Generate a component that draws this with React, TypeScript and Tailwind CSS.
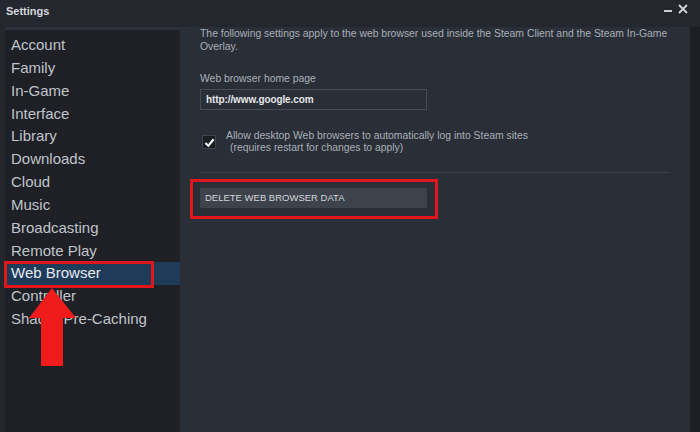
const menu = [
  "Account",
  "Family",
  "In-Game",
  "Interface",
  "Library",
  "Downloads",
  "Cloud",
  "Music",
  "Broadcasting",
  "Remote Play",
  "Web Browser",
  "Controller",
  "Shader Pre-Caching",
];

export default function App() {
  return (
    <div
      className="relative w-[700px] h-[432px] overflow-hidden bg-[#25272e] flex flex-col"
      style={{ fontFamily: '"Liberation Sans", Arial, sans-serif' }}
    >
      {/* Title bar */}
      <div className="h-[27px] flex items-start justify-between pl-[6px] pr-[12px]">
        <span className="mt-[3px] text-[11px] font-bold text-[#d4d7dc]">Settings</span>
        <div className="flex items-center gap-[6px] mt-[2px] text-[#c9ccd1]">
          <span className="mt-[6px] w-[8px] h-[2px] bg-[#c9ccd1]" />
          <svg width="10" height="10" viewBox="0 0 10 10" className="mt-[2px]">
            <path d="M1 1 L9 9 M9 1 L1 9" stroke="#d0d3d8" strokeWidth="1.8" />
          </svg>
        </div>
      </div>

      <div className="flex flex-1 pl-[5px]">
        {/* Sidebar */}
        <div className="w-[175px] bg-[#1e2026] border-t-[3px] border-[#2d3038] pt-[4px]">
          {menu.map((item) => (
            <div
              key={item}
              className={
                item === "Web Browser"
                  ? "h-[22.85px] leading-[22.85px] pl-[6px] text-[15px] text-[#e6e9ee] bg-[#1e3b5a]"
                  : "h-[22.85px] leading-[22.85px] pl-[6px] text-[15px] text-[#c0c4ca]"
              }
            >
              {item}
            </div>
          ))}
        </div>

        {/* Content */}
        <div className="relative flex-1 bg-[#2a2e37] px-[20px]">
          <p className="text-[10.4px] leading-[13px] text-[#a9aeb6]">
            The following settings apply to the web browser used inside the Steam Client and the Steam In-Game
            <br />
            Overlay.
          </p>

          <p className="mt-[19px] text-[10.4px] leading-[13px] text-[#a9aeb6]">Web browser home page</p>
          <div className="mt-[4px] w-[227px] h-[21px] border border-[#464b55] bg-[#2a2e37] flex items-center pl-[5px]">
            <span className="text-[10px] text-[#e4e6ea] font-bold tracking-[-0.1px]">http://www.google.com</span>
          </div>

          <div className="mt-[20px] flex items-center gap-[10px] pl-[2px]">
            <div className="w-[14px] h-[14px] bg-[#1b1d22] border border-[#3e434c] flex items-center justify-center">
              <svg width="11" height="11" viewBox="0 0 12 12">
                <path d="M1.5 6.5 L4.8 9.5 L10.5 2.5" fill="none" stroke="#f2f3f5" strokeWidth="2.4" />
              </svg>
            </div>
            <div className="text-[10.4px] leading-[12px] text-[#a9aeb6]">
              <p>Allow desktop Web browsers to automatically log into Steam sites</p>
              <p className="pl-[4px]">(requires restart for changes to apply)</p>
            </div>
          </div>

          <div className="mt-[18px] h-px bg-[#3b3f48]" />

          <div className="mt-[15px] w-[227px] h-[20px] bg-[#3d424b] flex items-center pl-[5px]">
            <span className="text-[9.5px] text-[#d3d6db]">DELETE WEB BROWSER DATA</span>
          </div>
        </div>

        {/* Right edge */}
        <div className="w-[10px] bg-[#1d1f24]" />
      </div>

      {/* Annotations */}
      <div className="absolute left-[4px] top-[261px] w-[150px] h-[27px] border-[3px] border-[#e0161b]" />
      <div className="absolute left-[190px] top-[179px] w-[248px] h-[40px] border-[3px] border-[#e0161b]" />
      <svg className="absolute left-0 top-0" width="100" height="370" viewBox="0 0 100 370">
        <polygon points="52,288 76,318 63,318 63,366 41,366 41,318 29,318" fill="#f01c1c" />
      </svg>
    </div>
  );
}
